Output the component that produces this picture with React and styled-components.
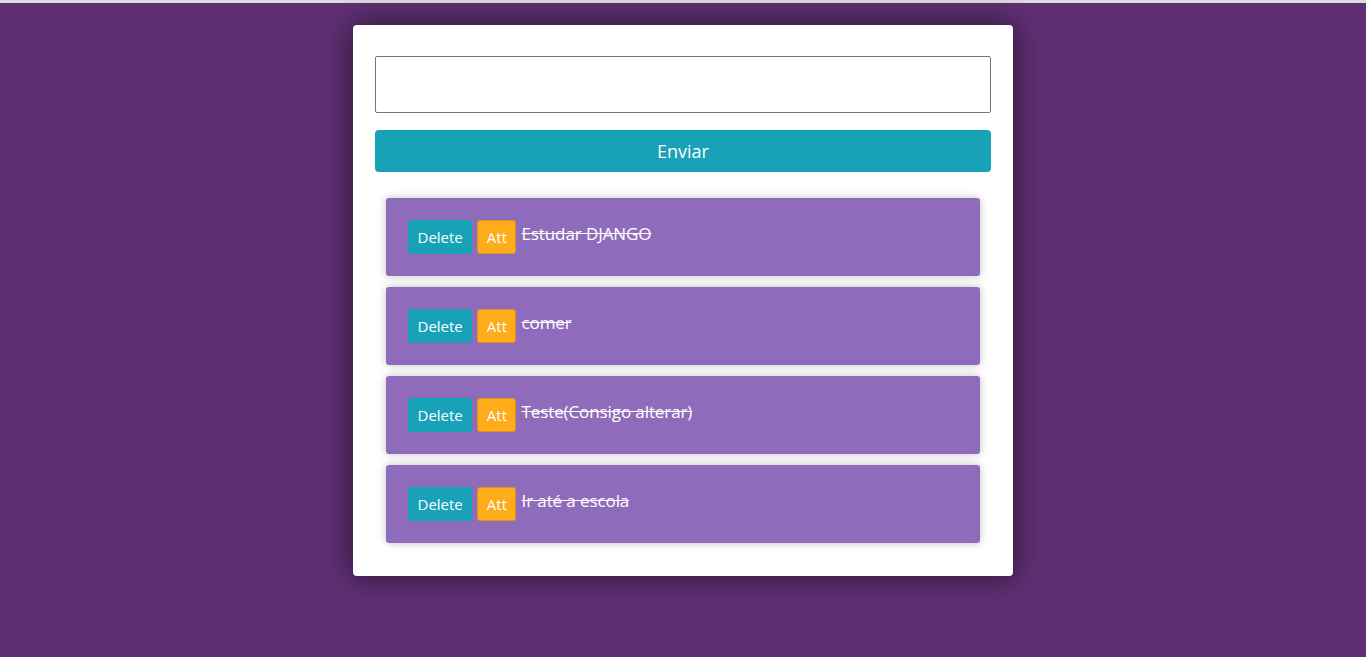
import styled, { createGlobalStyle } from "styled-components";

const tasks = [
  "Estudar DJANGO",
  "comer",
  "Teste(Consigo alterar)",
  "Ir até a escola",
];

function App() {
  return (
    <Page>
      <GlobalStyle />
      <TopLine />
      <Card>
        <TaskInput type="text" />
        <SendButton>Enviar</SendButton>
        <TaskList>
          {tasks.map((task) => (
            <TaskItem key={task}>
              <SmallButton $variant="delete">Delete</SmallButton>
              <SmallButton $variant="att">Att</SmallButton>
              <TaskText>{task}</TaskText>
            </TaskItem>
          ))}
        </TaskList>
      </Card>
    </Page>
  );
}

const GlobalStyle = createGlobalStyle`
  * {
    box-sizing: border-box;
  }

  body {
    margin: 0;
    background: #5f2f73;
    font-family: "Open Sans", "Noto Sans", sans-serif;
  }
`;

const Page = styled.div`
  display: flex;
  flex-direction: column;
  align-items: center;

  min-height: 100vh;
  background: #5f2f73;
`;

const TopLine = styled.div`
  align-self: stretch;
  height: 3px;
  background: #dcdcdc;
`;

const Card = styled.div`
  display: flex;
  flex-direction: column;

  width: 660px;
  margin-top: 22px;
  padding: 31px 22px 33px;

  background: #ffffff;
  border-radius: 4px;
  box-shadow: 0 0 30px rgba(0, 0, 0, 0.6);
`;

const TaskInput = styled.input`
  width: 100%;
  height: 57px;
  padding: 0 10px;

  border: 1px solid #767676;
  border-radius: 2px;
  outline: none;

  font-family: inherit;
  font-size: 17px;
`;

const SendButton = styled.button`
  width: 100%;
  height: 42px;
  margin-top: 17px;

  border: none;
  border-radius: 4px;
  background: #17a2b8;
  color: #ffffff;

  font-family: inherit;
  font-size: 18px;
`;

const TaskList = styled.div`
  display: flex;
  flex-direction: column;
  row-gap: 11px;

  margin: 26px 11px 0;
`;

const TaskItem = styled.div`
  display: flex;
  align-items: flex-start;
  column-gap: 5px;

  height: 78px;
  padding: 22px;

  background: #8f6bbb;
  border-radius: 3px;
  box-shadow: 0 0 9px rgba(0, 0, 0, 0.25);
`;

const SmallButton = styled.button`
  height: 34px;
  padding: 0 8.5px;

  border: 1px solid ${(p) => (p.$variant === "att" ? "#e0911a" : "#17a2b8")};
  border-radius: 3px;
  background: ${(p) => (p.$variant === "att" ? "#ffac1b" : "#17a2b8")};
  color: #ffffff;

  font-family: inherit;
  font-size: 15px;
`;

const TaskText = styled.span`
  color: #ffffff;
  font-size: 17px;
  line-height: 27px;
  letter-spacing: -0.1px;
  text-decoration: line-through;
`;

export default App;
